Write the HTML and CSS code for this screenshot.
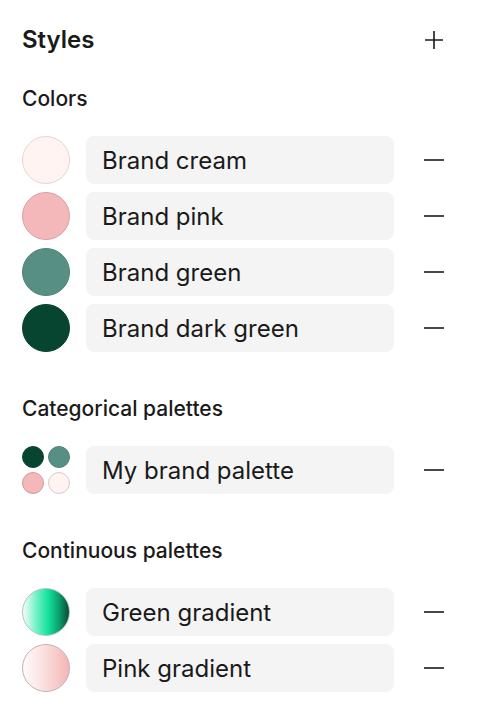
FILE: index.html
```html
<!DOCTYPE html>
<html>
<head>
<meta charset="utf-8">
<link rel="stylesheet" href="styles.css">
</head>
<body>
<div class="panel">
  <div class="header">
    <h1 class="title">Styles</h1>
    <button class="icon-btn" aria-label="Add">
      <svg width="20" height="20" viewBox="0 0 20 20"><path d="M10 1v18M1 10h18" stroke="#1a1a1a" stroke-width="1.6" fill="none"/></svg>
    </button>
  </div>

  <section class="section first">
    <h2 class="section-title">Colors</h2>
    <div class="rows">
      <div class="row">
        <span class="swatch cream"></span>
        <div class="pill">Brand cream</div>
        <button class="icon-btn" aria-label="Remove"><svg width="20" height="20" viewBox="0 0 20 20"><path d="M0 10h20" stroke="#1a1a1a" stroke-width="1.6"/></svg></button>
      </div>
      <div class="row">
        <span class="swatch pink"></span>
        <div class="pill">Brand pink</div>
        <button class="icon-btn" aria-label="Remove"><svg width="20" height="20" viewBox="0 0 20 20"><path d="M0 10h20" stroke="#1a1a1a" stroke-width="1.6"/></svg></button>
      </div>
      <div class="row">
        <span class="swatch green"></span>
        <div class="pill">Brand green</div>
        <button class="icon-btn" aria-label="Remove"><svg width="20" height="20" viewBox="0 0 20 20"><path d="M0 10h20" stroke="#1a1a1a" stroke-width="1.6"/></svg></button>
      </div>
      <div class="row">
        <span class="swatch dark"></span>
        <div class="pill">Brand dark green</div>
        <button class="icon-btn" aria-label="Remove"><svg width="20" height="20" viewBox="0 0 20 20"><path d="M0 10h20" stroke="#1a1a1a" stroke-width="1.6"/></svg></button>
      </div>
    </div>
  </section>

  <section class="section">
    <h2 class="section-title">Categorical palettes</h2>
    <div class="rows">
      <div class="row">
        <span class="mini-grid">
          <span class="mini dark"></span>
          <span class="mini green"></span>
          <span class="mini pink"></span>
          <span class="mini cream"></span>
        </span>
        <div class="pill">My brand palette</div>
        <button class="icon-btn" aria-label="Remove"><svg width="20" height="20" viewBox="0 0 20 20"><path d="M0 10h20" stroke="#1a1a1a" stroke-width="1.6"/></svg></button>
      </div>
    </div>
  </section>

  <section class="section">
    <h2 class="section-title">Continuous palettes</h2>
    <div class="rows">
      <div class="row">
        <span class="swatch grad-green"></span>
        <div class="pill">Green gradient</div>
        <button class="icon-btn" aria-label="Remove"><svg width="20" height="20" viewBox="0 0 20 20"><path d="M0 10h20" stroke="#1a1a1a" stroke-width="1.6"/></svg></button>
      </div>
      <div class="row">
        <span class="swatch grad-pink"></span>
        <div class="pill">Pink gradient</div>
        <button class="icon-btn" aria-label="Remove"><svg width="20" height="20" viewBox="0 0 20 20"><path d="M0 10h20" stroke="#1a1a1a" stroke-width="1.6"/></svg></button>
      </div>
    </div>
  </section>
</div>
</body>
</html>
```

FILE: styles.css
```css
html, body {
  margin: 0;
  padding: 0;
  background: #ffffff;
}

body {
  font-family: Inter, "Noto Sans", sans-serif;
  color: #1a1a1a;
}

.panel {
  padding: 24px 38px 0 22px;
}

.header {
  display: flex;
  align-items: center;
  justify-content: space-between;
  height: 32px;
}

.title {
  margin: 0;
  font-size: 24px;
  line-height: 32px;
  font-weight: 600;
}

.icon-btn {
  border: 0;
  background: none;
  padding: 0;
  width: 20px;
  height: 20px;
  display: flex;
  align-items: center;
  justify-content: center;
}

.section {
  margin-top: 43px;
}

.section.first {
  margin-top: 29px;
}

.section-title {
  margin: 0 0 23px;
  font-size: 21px;
  line-height: 28px;
  font-weight: 500;
}

.rows {
  display: flex;
  flex-direction: column;
  gap: 8px;
}

.row {
  display: flex;
  align-items: center;
  height: 48px;
}

.pill {
  flex: 1;
  height: 48px;
  margin: 0 30px 0 16px;
  background: #f4f4f4;
  border-radius: 8px;
  padding-left: 16px;
  display: flex;
  align-items: center;
  font-size: 24px;
  font-weight: 400;
}

.swatch {
  width: 48px;
  height: 48px;
  box-sizing: border-box;
  border-radius: 50%;
  border: 1.5px solid transparent;
  flex: none;
}

.swatch.cream { background: #fff4f2; border-color: #e3d6d4; }
.swatch.pink { background: #f4b8ba; border-color: #dba0a2; }
.swatch.green { background: #578f85; border-color: #4f8479; }
.swatch.dark { background: #074530; border-color: #074530; }

.swatch.grad-green {
  background: linear-gradient(90deg, #f2fff9 0%, #6ff0c4 30%, #14e29c 55%, #0b9a69 80%, #084a34 100%);
  border-color: #b8c4c0;
}

.swatch.grad-pink {
  background: linear-gradient(90deg, #fffafa 0%, #fbe0e0 45%, #f3b5b5 100%);
  border-color: #c9b0b0;
}

.mini-grid {
  width: 48px;
  height: 48px;
  display: grid;
  grid-template-columns: 22px 22px;
  grid-template-rows: 22px 22px;
  gap: 4px;
  flex: none;
}

.mini {
  border-radius: 50%;
  box-sizing: border-box;
  border: 1.5px solid transparent;
}

.mini.dark { background: #074530; border-color: #074530; }
.mini.green { background: #578f85; border-color: #4f8479; }
.mini.pink { background: #f4b8ba; border-color: #d29a9c; }
.mini.cream { background: #fff4f2; border-color: #d8cac8; }
```
